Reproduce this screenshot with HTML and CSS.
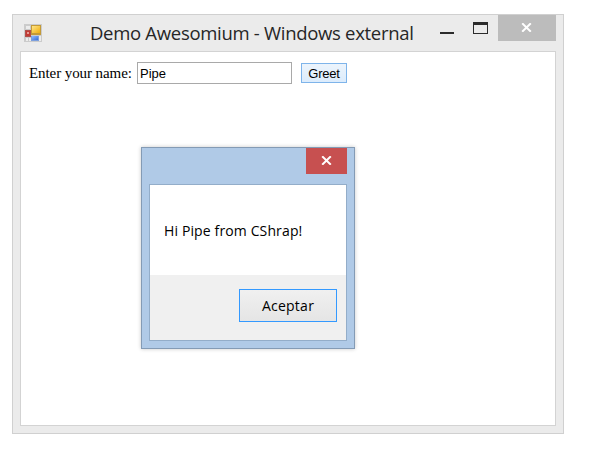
FILE: index.html
```html
<!DOCTYPE html>
<html lang="en">
<head>
<meta charset="utf-8">
<title>Demo Awesomium - Windows external</title>
<link rel="stylesheet" href="styles.css">
</head>
<body>
<main class="window">
  <header class="titlebar">
    <svg class="app-icon" width="18" height="18" viewBox="0 0 18 18" shape-rendering="crispEdges">
      <defs>
        <linearGradient id="gold" x2="1" y2="1"><stop offset="0" stop-color="#ffe68a"/><stop offset="1" stop-color="#efad0c"/></linearGradient>
        <linearGradient id="blue" x2="1" y2="1"><stop offset="0" stop-color="#8fbcff"/><stop offset="1" stop-color="#3a6fd8"/></linearGradient>
      </defs>
      <path fill="#cbcbcb" d="M0 0h18v18H0z"/>
      <path fill="#ececec" d="M2 2h4v3H2zM2 14h2v3H2zM5 14h2v3H5zM15 12h2v5h-2z"/>
      <path fill="#c39a38" d="M7 1h10v10H7z"/><path fill="url(#gold)" d="M8 2h8v7H8z"/>
      <path fill="#b0504b" d="M1 6h6v7H1z"/><path fill="#c23a34" d="M2 7h4v5H2z"/><path fill="#e59a92" d="M3 8h2v2H3z"/>
      <path fill="#7c9fdd" d="M7 12h8v5H7z"/><path fill="url(#blue)" d="M8 12h6v4H8z"/>
    </svg>
    <h1 class="title">Demo Awesomium - Windows external</h1>
    <div class="controls">
      <svg width="48" height="26" shape-rendering="crispEdges" fill="#2b2b2b"><path d="M0 17h14v2H0z"/><path fill-rule="evenodd" d="M33 7h15v12H33zM34 10v8h13v-8z"/></svg>
      <button class="close" aria-label="Close"><svg class="cross" width="11" height="9" viewBox="0 0 11 9"><path d="M1.200 .3L9.800 8.700M9.800 .3L1.200 8.700"/></svg></button>
    </div>
  </header>
  <section class="client">
    <form class="form">
      <label for="name">Enter your name:</label>
      <input id="name" class="name" type="text" value="Pipe">
      <button class="greet" type="button">Greet</button>
    </form>
  </section>
</main>
<div class="dialog" role="dialog">
  <div class="dialog-bar">
    <button class="close dialog-close" aria-label="Close"><svg class="cross" width="11" height="9" viewBox="0 0 11 9"><path d="M1.200 .3L9.800 8.700M9.800 .3L1.200 8.700"/></svg></button>
  </div>
  <div class="dialog-body">
    <div class="message"><span>Hi Pipe from CShrap!</span></div>
    <footer class="dialog-footer"><button class="accept"><span>Aceptar</span></button></footer>
  </div>
</div>
</body>
</html>
```
FILE: styles.css
```css
* { box-sizing: border-box; }
body { margin: 0; padding: 14px 0 0 12px; height: 454px; overflow: hidden; background: #fff; }
button { padding: 0; margin: 0; border-radius: 0; }
.window { width: 552px; height: 420px; padding: 0 7px 7px; display: flex; flex-direction: column; background: #ebebeb; border: 1px solid #d0d0d0; }
.titlebar { flex: 0 0 36px; display: flex; align-items: flex-start; }
.app-icon { margin: 9px 0 0 4px; flex: none; }
.title { margin: 4px 0 0 48px; width: 325px; font: 400 18.500px/27px "Open Sans", sans-serif; letter-spacing: -0.300px; white-space: nowrap; color: #262626; }
.controls { margin-left: auto; display: flex; gap: 10px; }
.close { width: 58px; height: 26px; border: 0; background: #bcbcbc; display: flex; align-items: flex-start; justify-content: center; padding: 8px 1px 0 0; }
.cross { fill: none; stroke: #fff; stroke-width: 2; display: block; }
.client { flex: 1; background: #fff; border: 1px solid #d3d3d3; padding: 10px 7px; }
.form { display: flex; align-items: center; height: 22px; font: 16px/20px "Liberation Serif", serif; color: #000; }
.form label { width: 109px; padding-left: 1px; white-space: nowrap; font-size: 15px; letter-spacing: -0.080px; }
.name { width: 155px; height: 22px; margin: 0; padding: 1px 2px 0; border: 1px solid #a9a9a9; font: 13px "Liberation Sans", sans-serif; }
.greet { width: 46px; height: 20px; padding-top: 1px; margin-left: 9px; border: 1px solid #7eb4ea; background: linear-gradient(#ecf4fc, #dcecfc); font: 13px/17px "Liberation Sans", sans-serif; letter-spacing: -0.200px; color: #000; }
.dialog { position: absolute; left: 141px; top: 147px; width: 214px; height: 202px; padding: 0 7px 7px; display: flex; flex-direction: column; background: #b0cae7; border: 1px solid #849bb5; box-shadow: 0 0 4px rgba(0,0,0,.22); }
.dialog-bar { flex: 0 0 36px; display: flex; justify-content: flex-end; }
.dialog-close { width: 41px; padding-right: 0; background: #c75050; }
.dialog-body { flex: 1; display: flex; flex-direction: column; border: 1px solid #93adc9; background: #fff; font: 14px/20px "Open Sans", sans-serif; color: #000; }
.message { flex: 0 0 90px; padding: 36px 0 0 14px; white-space: nowrap; letter-spacing: 0.130px; }
.dialog-footer { flex: 1; background: #f0f0f0; padding: 14px 9px; display: flex; justify-content: flex-end; align-items: flex-start; }
.accept { width: 98px; height: 33px; border: 1px solid #3399ff; background: linear-gradient(#f0f0f0, #e5e5e5); font: 14px/31px "Open Sans", sans-serif; letter-spacing: 0.250px; color: #000; }
```
